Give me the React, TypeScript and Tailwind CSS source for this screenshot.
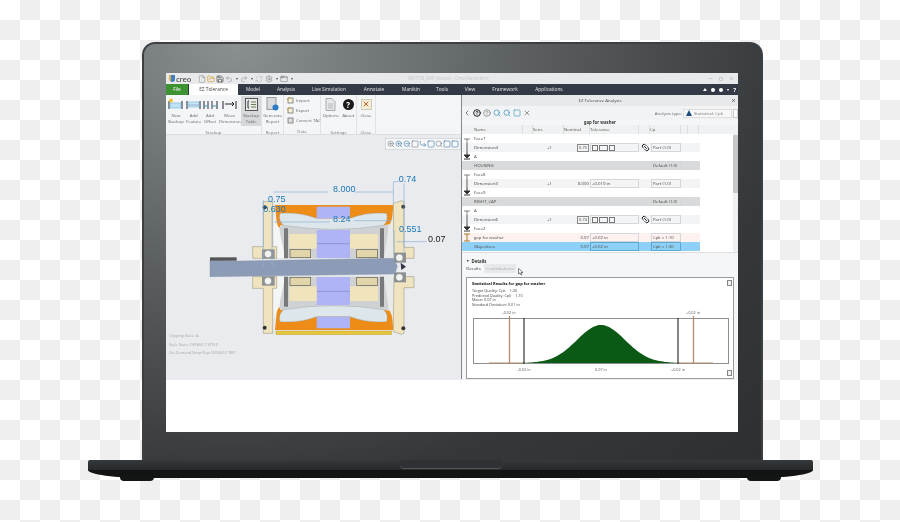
import React from "react";
import { ChevronLeft, X, ZoomIn, ZoomOut, Search, Link2, HelpCircle, Minus, Square, CornerDownRight, File, FolderOpen, Save, Undo2, Redo2, RefreshCw, Settings, AppWindow } from "lucide-react";

const SANS = "font-['Open_Sans',sans-serif]";

function StackIcon({ kind }: { kind: number }) {
  return (
    <svg width="15" height="13" viewBox="0 0 15 13">
      <path d="M1 3V11M14 3V11" stroke="#223" strokeWidth="1" />
      {kind === 0 && <rect x="2" y="5" width="11" height="5" fill="#bfe3f5" stroke="#6fb4d8" strokeWidth=".6" />}
      {kind === 1 && <rect x="2" y="4" width="11" height="5" fill="#cbe6f5" stroke="#6fb4d8" strokeWidth=".6" />}
      {kind === 2 && <path d="M5 3V11M9 3V11" stroke="#335" strokeWidth="1" />}
      {kind === 3 && <path d="M3 6H12M10 4L12 6L10 8" stroke="#222" strokeWidth="1" fill="none" />}
      {kind === 0 && <circle cx="3" cy="2.5" r="2" fill="#f2c230" />}
      {kind === 1 && <path d="M2 7H13" stroke="#7a9cc0" strokeWidth=".7" />}
      {kind === 2 && <path d="M1 8H5M9 8H14" stroke="#49a" strokeWidth="1" />}
    </svg>
  );
}

function RibbonBtn({ w, a, b, icon, active }: { w: string; a: string; b?: string; icon: React.ReactNode; active?: boolean }) {
  return (
    <div className={`${w} h-[30px] flex flex-col items-center ${active ? "bg-[#d6d8da]" : ""}`}>
      <div className="h-4 flex items-center justify-center">{icon}</div>
      <span className="text-[4.3px] leading-[6px] text-[#666] whitespace-nowrap">{a}</span>
      {b && <span className="text-[4.3px] leading-[6px] text-[#666] whitespace-nowrap">{b}</span>}
    </div>
  );
}

function Group({ w, label, children }: { w: string; label: string; children: React.ReactNode }) {
  return (
    <div className={`${w} h-full flex flex-col border-r border-[#e0e2e4]`}>
      <div className="h-[30px] mt-px flex">{children}</div>
      <div className="mt-[3px] text-center text-[4.3px] leading-[6px] text-[#777]">{label}</div>
    </div>
  );
}

function Ribbon() {
  return (
    <div className="h-10 flex bg-[#f4f5f6] border-b border-[#dcdee0]">
      <Group w="w-24" label="Stackup">
        <RibbonBtn w="w-5" a="New" b="Stackup" icon={<StackIcon kind={0} />} />
        <RibbonBtn w="w-4" a="Add" b="Feature" icon={<StackIcon kind={1} />} />
        <RibbonBtn w="w-[17px]" a="Add" b="Offset" icon={<StackIcon kind={2} />} />
        <RibbonBtn w="w-[23px]" a="Move" b="Dimension" icon={<StackIcon kind={3} />} />
        <RibbonBtn
          w="w-5"
          active
          a="Stackup"
          b="Table"
          icon={
            <svg width="13" height="13" viewBox="0 0 13 13">
              <rect x=".5" y=".5" width="12" height="12" fill="#e8eaea" stroke="#555" />
              <path d="M3 3V10M3 3H4M3 10H4" stroke="#333" />
              <path d="M6 4H11M6 6.5H11M6 9H11" stroke="#6a7a55" />
            </svg>
          }
        />
      </Group>
      <Group w="w-[22px]" label="Report">
        <RibbonBtn
          w="w-[22px]"
          a="Generate"
          b="Report"
          icon={
            <svg width="13" height="14" viewBox="0 0 13 14">
              <rect x="1" y=".5" width="9" height="12" fill="#d9dcdc" stroke="#999" />
              <circle cx="9.5" cy="10.5" r="3" fill="#2b7cc4" />
            </svg>
          }
        />
      </Group>
      <Group w="w-[37px]" label="Data">
        <div className="flex flex-col pl-[3px] pt-px gap-[4px]">
          {["Import", "Export", "Convert TAC"].map((t, i) => (
            <div key={t} className="flex items-center gap-[2px] h-[6px]">
              <svg width="7" height="7" viewBox="0 0 7 7">
                <rect x="1" y="1" width="5" height="5" fill={i === 2 ? "#ddd" : "#f4f0d8"} stroke="#666" strokeWidth=".7" />
                {i < 2 && <path d="M0 3L3 0" stroke="#c79a20" strokeWidth="1" />}
              </svg>
              <span className="text-[4.3px] leading-[6px] text-[#666] whitespace-nowrap">{t}</span>
            </div>
          ))}
        </div>
      </Group>
      <Group w="w-9" label="Settings">
        <RibbonBtn
          w="w-5"
          a="Options"
          icon={
            <svg width="11" height="13" viewBox="0 0 11 13">
              <path d="M1 .5H7L10 3.5V12.5H1Z" fill="#e6e8ea" stroke="#aaa" />
              <path d="M3 6H8M3 8H8M3 10H8" stroke="#b5b8ba" />
            </svg>
          }
        />
        <RibbonBtn
          w="w-4"
          a="About"
          icon={
            <div className="w-[11px] h-[11px] rounded-full bg-[#1a1a1a] text-white text-[8px] leading-[11px] font-bold text-center">?</div>
          }
        />
      </Group>
      <Group w="w-[19px]" label="Close">
        <RibbonBtn
          w="w-[19px]"
          a="Close"
          icon={
            <div className="w-[11px] h-[11px] bg-[#f3ecd8] border border-[#cfcab8] flex items-center justify-center">
              <X size={8} strokeWidth={3} className="text-[#c8612a]" />
            </div>
          }
        />
      </Group>
    </div>
  );
}

function Cad() {
  const half = (
    <>
      <path d="M225 165H580L575 222 548 226H255L232 235Z" fill="#ed8c16" />
      <rect x="240" y="225" width="325" height="100" fill="#cfd1d3" />
      <path d="M218 195L236 232 256 325H222Z" fill="#f4f5f5" />
      <path d="M580 195L566 232 552 325H582Z" fill="#e8eaea" />
      <path d="M252 235H264V325H252ZM540 235H552V325H540Z" fill="#77797b" />
      <path d="M240 190Q300 186 350 205H450Q500 186 560 190 566 215 550 226 400 250 250 226 234 210 240 190Z" fill="#dde6ea" stroke="#8a9298" strokeWidth="1" />
      <rect x="350" y="170" width="100" height="35" fill="#aeb4f6" />
      <rect x="350" y="240" width="100" height="84" fill="#aeb4f6" />
      <path d="M350 281H450" stroke="#8088c4" strokeWidth="2" />
      <rect x="268" y="252" width="82" height="44" fill="#f0e4bd" />
      <rect x="450" y="252" width="84" height="44" fill="#f0e4bd" />
      <rect x="270" y="298" width="62" height="25" fill="#e2d5aa" stroke="#5e5c48" strokeWidth="2" />
      <rect x="470" y="298" width="62" height="25" fill="#e2d5aa" stroke="#5e5c48" strokeWidth="2" />
      <path d="M190 155H218V290H230V325H158V290H190Z" fill="#efe4bf" stroke="#8c8a70" strokeWidth="1.5" />
      <path d="M580 160L605 152 612 155V292H642V325H582Z" fill="#efe4bf" stroke="#8c8a70" strokeWidth="1.5" />
      <rect x="186" y="298" width="38" height="28" fill="#8e9190" />
      <circle cx="204" cy="312" r="11" fill="#f2f3f3" stroke="#555" />
      <rect x="582" y="308" width="36" height="30" fill="#8e9190" />
      <circle cx="598" cy="323" r="11" fill="#f2f3f3" stroke="#555" />
      <circle cx="194" cy="172" r="6" fill="#333" />
      <circle cx="610" cy="170" r="6" fill="#333" />
    </>
  );
  return (
    <svg width="295" height="244" viewBox="-102 -45 885 732">
      {half}
      <g transform="translate(0 705) scale(1 -1)">{half}</g>
      <rect x="228" y="543" width="347" height="11" fill="#e9c53d" stroke="#a88c20" />
      <path d="M30 330L110 333 580 325 592 348 585 372 30 380Z" fill="#8d9cb6" stroke="#7585a0" />
      <rect x="30" y="322" width="80" height="10" fill="#555" />
      <path d="M602 338L618 350 604 360Z" fill="#334" />
      <g stroke="#8cb0d8" strokeWidth="2" fill="none">
        <path d="M220 126H385M465 126H580M580 95V160M580 95H598M612 100V310" />
        <path d="M190 150V350M216 170V350M222 340V350M222 216H390M462 212H575" />
        <path d="M582 240V320M590 275H680" />
      </g>
      <g fontFamily="Liberation Sans, sans-serif" fontSize="27" fill="#1c78b8">
        <text x="399" y="127">8.000</text>
        <text x="596" y="97">0.74</text>
        <text x="204" y="157">0.75</text>
        <text x="190" y="187">0.630</text>
        <text x="399" y="216">8.24</text>
        <text x="597" y="246">0.551</text>
        <text x="684" y="276" fill="#222">0.07</text>
      </g>
    </svg>
  );
}

function Viewport() {
  const glyphs = [ZoomIn, ZoomIn, ZoomOut, Square, CornerDownRight, Square, Search, Square, Square];
  return (
    <div className="h-[244px] bg-[#e9ebee] relative">
      <Cad />
      <div className="absolute left-[219px] top-[3px] h-[12px] w-[76px] bg-[#f6f7f8] border border-[#d6d8da] flex items-center justify-around px-px">
        {glyphs.map((G, i) => (
          <G key={i} size={8} strokeWidth={1.6} className={i % 3 === 0 ? "text-[#667]" : "text-[#2a6a9a]"} />
        ))}
      </div>
      <div className="absolute left-[3px] top-[198px] flex flex-col gap-[2.5px] text-[3.9px] leading-[6px] text-[#a6a9ad]">
        <span>Clipping State: A</span>
        <span>Style State: DEFAULT STYLE</span>
        <span>On-Demand Simp Rep: DEFAULT REP</span>
      </div>
    </div>
  );
}

type Row = {
  name: string;
  mark?: "top" | "mid" | "bot" | "beam";
  sens?: string;
  nom?: string;
  nomBox?: boolean;
  tol?: string;
  tolBox?: boolean;
  link?: boolean;
  cp?: string;
  bg?: string;
};

const rows: Row[] = [
  { name: "Face7", mark: "top" },
  { name: "Dimension4", mark: "mid", sens: "+1", nom: "0.75", nomBox: true, tolBox: true, link: true, cp: "Part (1.0)", bg: "bg-[#f3f4f5]" },
  { name: "A", mark: "bot" },
  { name: "HOUSING", cp: "Default (1.0)", bg: "bg-[#d9dadb]" },
  { name: "Face8", mark: "top" },
  { name: "Dimension3", mark: "mid", sens: "+1", nom: "8.000", tol: "±0.010 in", link: false, cp: "Part (1.0)", bg: "bg-[#f3f4f5]" },
  { name: "Face9", mark: "bot" },
  { name: "RIGHT_CAP", cp: "Default (1.0)", bg: "bg-[#d9dadb]" },
  { name: "A", mark: "top" },
  { name: "Dimension6", mark: "mid", sens: "+1", nom: "0.74", nomBox: true, tolBox: true, link: true, cp: "Part (1.0)", bg: "bg-[#f3f4f5]" },
  { name: "Face2", mark: "bot" },
  { name: "gap for washer", mark: "beam", nom: "0.07", tol: "±0.02 in", cp: "Cpk = 1.10", bg: "bg-[#fdf2ef]" },
  { name: "Objectives", nom: "0.07", tol: "±0.02 in", cp: "Cpk = 1.30", bg: "bg-[#8fd1f6]" },
];

function Mark({ kind, color = "#333" }: { kind?: Row["mark"]; color?: string }) {
  return (
    <svg width="12" height="9" viewBox="0 0 12 9" className="shrink-0">
      {kind === "top" && <path d="M2 5H8M5 5V9" stroke="#666" strokeWidth=".8" />}
      {kind === "mid" && <path d="M5 0V9" stroke={color} strokeWidth=".8" />}
      {kind === "bot" && <path d="M5 0V5M2 3H8L5 6ZM2 7H8" stroke={color} strokeWidth="1" fill={color} />}
      {kind === "beam" && <path d="M2 1H8M2 8H8M5 1V8" stroke="#a5782a" strokeWidth="1" />}
    </svg>
  );
}

function TableRow({ r }: { r: Row }) {
  const blue = r.bg === "bg-[#8fd1f6]";
  const boxed = blue ? "border-[#5aa9d8]" : "border-[#d4d6d8]";
  return (
    <div className={`h-[9px] flex items-center w-[238px] text-[4.3px] leading-[9px] text-[#444] ${r.bg ?? ""}`}>
      <Mark kind={r.mark} />
      <span className="w-[58px] whitespace-nowrap">{r.name}</span>
      <span className="w-[28px] pl-[15px]">{r.sens}</span>
      <div className="w-[30px] flex justify-end pr-[1px]">
        {r.nom &&
          (r.nomBox ? <span className="border border-[#888] px-px leading-[6px] text-[4px]">{r.nom}</span> : <span>{r.nom}</span>)}
      </div>
      <div className={`w-[49px] h-[9px] px-[1px] flex items-center ${r.tol || r.tolBox ? `border ${boxed}` : ""}`}>
        {r.tolBox ? (
          <span className="flex gap-px">
            <span className="border border-[#777] w-[6px] h-[6px]" />
            <span className="border border-[#777] w-[9px] h-[6px]" />
            <span className="border border-[#777] w-[6px] h-[6px]" />
          </span>
        ) : (
          r.tol
        )}
      </div>
      <div className="w-[12px] flex justify-center">{r.link && <Link2 size={9} strokeWidth={2.5} className="rotate-45 text-[#222]" />}</div>
      <div className={`w-[30px] h-[9px] px-px whitespace-nowrap ${r.cp ? `border ${boxed}` : ""}`}>
        <span className="relative -top-px">{r.cp}</span>
      </div>
    </div>
  );
}

function Chart() {
  const pts: string[] = [];
  for (let x = 520; x <= 680; x += 2) {
    const y = 363 - 38 * Math.exp(-((x - 600) ** 2) / (2 * 24 * 24));
    pts.push(`${x},${y.toFixed(1)}`);
  }
  const label = (x: number, y: number, t: string) => (
    <text x={x} y={y} textAnchor="middle" fontSize="3.8" fill="#555">
      {t}
    </text>
  );
  return (
    <div className="ml-[4px] w-[268px] h-[102px] bg-white border border-[#9a9da0] relative">
      <div className="h-[31px]">
        <div className="px-[5px] pt-[3px] text-[4px] leading-[5px] font-bold text-[#111]">Statistical Results for gap for washer</div>
        <div className="px-[5px] pt-[3px] flex flex-col text-[3.8px] leading-[4.6px] text-[#444]">
          <span>Target Quality: Cpk = 1.30</span>
          <span>Predicted Quality: Cpk = 1.10</span>
          <span>Mean: 0.07 in</span>
          <span>Standard Deviation: 0.01 in</span>
        </div>
      </div>
      <svg width="268" height="70" viewBox="466 309 268 70" className="block" fontFamily="Open Sans, sans-serif">
        <rect x="472.5" y="318.5" width="255" height="45" fill="#fff" stroke="#8d9093" />
        <polygon points={`520,363 ${pts.join(" ")} 680,363`} fill="#0a5a16" />
        <path d="M488 363H523M677 363H712" stroke="#b58b6c" strokeWidth="1" />
        <path d="M508.5 316V363M692.5 316V363" stroke="#b58b6c" strokeWidth="1.3" />
        <path d="M523 318V364M677 318V364" stroke="#222" strokeWidth="1.1" />
        {label(508, 314, "-0.02 in")}
        {label(692, 314, "+0.02 in")}
        {label(523, 371, "-0.02 in")}
        {label(600, 371, "0.07 in")}
        {label(677, 371, "+0.02 in")}
      </svg>
      <div className="absolute right-[1px] top-[2px] w-[5px] h-[6px] border border-[#888] bg-[#eee]" />
      <div className="absolute right-[1px] bottom-[2px] w-[5px] h-[6px] border border-[#888] bg-[#eee]" />
    </div>
  );
}

function Panel() {
  const heads: [string, string][] = [
    ["w-[49px]", "Name"],
    ["w-[10px]", ""],
    ["w-[31px]", "Sens"],
    ["w-[26px]", "Nominal"],
    ["w-[49px]", "Tolerance"],
    ["w-[11px]", ""],
    ["w-[31px]", "Cp"],
    ["w-[7px]", ""],
    ["w-[11px]", ""],
  ];
  return (
    <div className="w-[277px] h-[284px] flex flex-col bg-[#f5f6f7] border-l border-[#85888b]">
      <div className="h-[11px] bg-[#e7e9eb] flex items-center justify-center relative text-[4.3px] text-[#444]">
        EZ Tolerance Analysis
        <X size={5} strokeWidth={3} className="absolute right-[2px] top-[3px] text-[#444]" />
      </div>
      <div className="h-[14px] flex items-center pl-[1px] gap-[2px] text-[#444] bg-[#f2f3f4]">
        <ChevronLeft size={8} />
        <HelpCircle size={8} strokeWidth={3} className="text-[#222]" />
        <HelpCircle size={8} className="text-[#777]" />
        <Search size={8} strokeWidth={2.5} className="text-[#4a9ac0]" />
        <Search size={8} strokeWidth={2.5} className="text-[#4a9ac0]" />
        <Square size={8} strokeWidth={2} className="text-[#4a9ac0]" />
        <X size={8} className="text-[#666]" />
        <div className="ml-auto flex items-center gap-px">
          <span className="text-[4.3px] text-[#666]">Analysis type:</span>
          <div className="w-[49px] h-[9px] bg-[#f8f8f8] border border-[#ddd] flex items-center text-[4.3px] text-[#777] whitespace-nowrap pl-[2px] gap-[2px]">
            <span className="w-0 h-0 border-x-[3px] border-x-transparent border-b-[6px] border-b-[#1c4c7c]" />
            Statistical: Cpk
          </div>
          <div className="w-[5px] h-[9px] bg-white border border-[#ccc]" />
        </div>
      </div>
      <div className="h-[5px] text-center text-[4.3px] leading-[5px] font-bold text-[#333]">gap for washer</div>
      <div className="h-[9px] flex text-[4.3px] leading-[9px] text-[#555] bg-[#f0f1f2]">
        <span className="w-[12px]" />
        {heads.map(([w, t], i) => (
          <span key={i} className={`${w} border-r border-[#dcdee0] shrink-0`}>
            {t}
          </span>
        ))}
      </div>
      <div className="h-[118px] flex bg-white">
        <div className="w-[271px]">
          {rows.map((r, i) => (
            <TableRow key={i} r={r} />
          ))}
        </div>
        <div className="w-[5px] bg-[#eff0f1]">
          <div className="h-[58px] mt-px bg-[#c5c7c9]" />
        </div>
      </div>
      <div className="h-[12px] pl-[4px] flex items-end gap-[2px] text-[4.3px] leading-[6px] font-bold text-[#333] border-t border-[#dcdee0]">
        <span className="text-[3.5px]">▼</span> Details
      </div>
      <div className="h-[12px] flex items-start pl-[2px] text-[4.3px] leading-[9px]">
        <span className="w-[19px] h-[9px] text-center text-[#444] bg-[#f7f8f9]">Results</span>
        <span className="ml-[1px] w-[32px] h-[9px] text-center text-[#aaa] bg-[#e8e9ea]">Contributions</span>
        <svg width="6" height="8" viewBox="0 0 6 8" className="ml-[2px] mt-[4px]">
          <path d="M.5.5V6L2 4.8 3 7 4 6.5 3 4.5H5Z" fill="#fff" stroke="#333" strokeWidth=".6" />
        </svg>
      </div>
      <div className="mt-[1px]">
        <Chart />
      </div>
    </div>
  );
}

function QuickBar() {
  const cls = "shrink-0";
  const caret = <span className="w-[5px] text-center text-[4px] leading-[10px] text-[#555]">▾</span>;
  return (
    <div className="ml-[2px] flex items-center gap-px">
      <File size={8} strokeWidth={1.6} className={`${cls} text-[#888]`} />
      <FolderOpen size={8} strokeWidth={2} className={`${cls} text-[#d9a02c]`} />
      <Save size={8} strokeWidth={2} className={`${cls} text-[#444]`} />
      <Undo2 size={8} strokeWidth={1.6} className={`${cls} text-[#8a8f9a]`} />
      {caret}
      <Redo2 size={8} strokeWidth={1.6} className={`${cls} text-[#8a8f9a]`} />
      {caret}
      <RefreshCw size={8} strokeWidth={1.4} className={`${cls} text-[#b0b2b4]`} />
      <Settings size={8} strokeWidth={1.6} className={`${cls} text-[#777] ml-[1px]`} />
      {caret}
      <AppWindow size={8} strokeWidth={1.6} className={`${cls} text-[#777]`} />
      {caret}
    </div>
  );
}

function Screen() {
  const leftTabs: [string, string][] = [
    ["w-[30px]", "Model"],
    ["w-9", "Analysis"],
    ["w-[50px]", "Live Simulation"],
    ["w-10", "Annotate"],
    ["w-[34px]", "Manikin"],
    ["w-7", "Tools"],
    ["w-7", "View"],
    ["w-[42px]", "Framework"],
    ["w-[46px]", "Applications"],
  ];
  return (
    <div className={`w-[572px] h-[359px] flex flex-col bg-white blur-[0.4px] ${SANS}`}>
      <div className="h-[11px] bg-[#e7e9eb] flex items-center relative">
        <div className="ml-[3px] flex items-center gap-[1px] w-[27px]">
          <span className="w-[6px] h-[7px] rounded-b-[3px] bg-[linear-gradient(90deg,#e2b04a_40%,#3f7fc0_40%)]" />
          <span className="text-[7.5px] leading-[10px] font-semibold text-[#555] tracking-tight">creo</span>
        </div>
        <QuickBar />
        <span className="absolute left-[242px] text-[4.5px] text-[#c6c8ca] whitespace-nowrap">MOTOR_SHP (Active) - Creo Parametric</span>
        <div className="ml-auto pr-[4px] flex items-center gap-[6px] text-[#999]">
          <Minus size={5} />
          <Square size={4} />
          <X size={5} />
        </div>
      </div>
      <div className="h-[11px] flex bg-[#343a45] text-[4.8px] leading-[11px] text-[#e4e6e8]">
        <div className="w-[22px] text-center bg-[#3d9231] text-white">File</div>
        <div className="w-[49px] ml-px text-center bg-white text-[#444]">EZ Tolerance</div>
        {leftTabs.map(([w, t]) => (
          <div key={t} className={`${w} shrink-0 text-center whitespace-nowrap`}>
            {t}
          </div>
        ))}
      </div>
      <div className="h-[284px] flex">
        <div className="w-[295px] flex flex-col">
          <Ribbon />
          <Viewport />
        </div>
        <Panel />
      </div>
      <div className="flex-1 bg-white border-t border-[#eceef0]" />
    </div>
  );
}

function TopRightIcons() {
  return (
    <div className="absolute right-[2px] top-[-11px] h-[11px] flex items-center gap-[4px] text-white">
      <span className="w-0 h-0 border-x-[2px] border-x-transparent border-b-[3px] border-b-white" />
      <span className="w-[4px] h-[4px] rounded-full bg-white" />
      <span className="w-[4px] h-[4px] rounded-full bg-white" />
      <span className="text-[4px] leading-[4px]">▾</span>
      <span className="text-[6px] leading-[6px] font-bold">?</span>
    </div>
  );
}

export default function App() {
  return (
    <div className="w-[900px] h-[522px] overflow-hidden flex flex-col bg-[conic-gradient(#efefef_25%,#fff_0_50%,#efefef_0_75%,#fff_0)] bg-[length:40px_40px]">
      <div className="ml-[142px] mt-[42px] w-[621px] h-[418px] pt-[31px] pl-[24px] rounded-t-[13px] border-2 border-b-0 border-[#3d4043] bg-[radial-gradient(ellipse_at_15%_0%,#8a8f92_0%,#5a5e61_40%,#35383a_75%,#2d2f30_100%)] box-border">
        <div className="-mt-[2px] -ml-[2px] relative">
          <Screen />
          <div className="absolute left-0 top-[22px] w-[572px] h-0 blur-[0.4px]">
            <TopRightIcons />
          </div>
        </div>
      </div>
      <div className="relative ml-[88px] w-[725px] h-[18px]">
        <div className="absolute left-[32px] bottom-[-3px] w-[34px] h-[8px] rounded-full bg-[#141515]" />
        <div className="absolute right-[32px] bottom-[-3px] w-[34px] h-[8px] rounded-full bg-[#141515]" />
        <div className="relative h-full flex justify-center bg-[linear-gradient(180deg,#36393b_0%,#26282a_55%,#121313_58%,#131414_100%)] rounded-t-[2px] rounded-bl-[60px_8px] rounded-br-[60px_8px]">
          <div className="w-[102px] h-[9px] bg-[#2f3234] rounded-b-[4px] border-b border-[#54585a]" />
        </div>
      </div>
    </div>
  );
}
